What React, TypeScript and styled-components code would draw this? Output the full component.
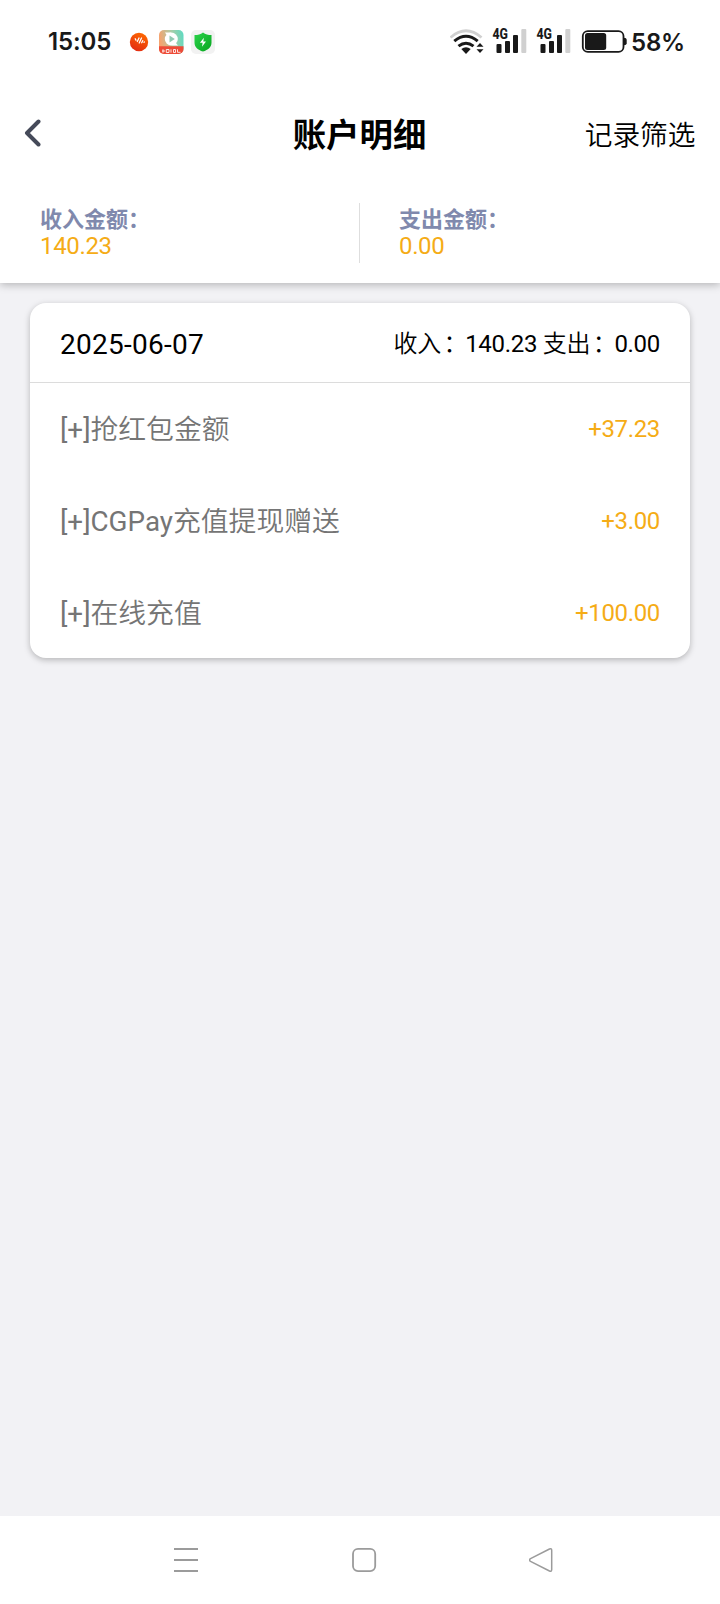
import React from "react";
import styled, { createGlobalStyle } from "styled-components";

const GlobalStyle = createGlobalStyle`
  * { box-sizing: border-box; }
  body {
    margin: 0;
    background: #f2f2f5;
    font-family: Roboto, "Noto Sans CJK SC", sans-serif;
    color: #000;
  }
`;

const Screen = styled.div`
  display: flex;
  flex-direction: column;
  width: 720px;
  height: 1604px;
  background: #f2f2f5;
`;

const Top = styled.header`
  height: 283px;
  background: #fff;
  box-shadow: 0 2px 8px rgba(0, 0, 0, 0.25);
`;

const StatusBar = styled.div`
  display: flex;
  justify-content: space-between;
  align-items: center;
  height: 84px;
  padding: 0 35px 0 48px;
  font: 600 24px/30px Inter, sans-serif;
  color: #191919;
`;

const StatusGroup = styled.div`
  display: flex;
  align-items: center;
  height: 30px;
`;

const Clock = styled.span`
  width: 80px;
  letter-spacing: -0.1px;
`;

const Percent = styled.span`
  padding-top: 1px;
  letter-spacing: -0.2px;
`;

const NavBar = styled.nav`
  display: grid;
  grid-template-columns: 1fr auto 1fr;
  align-items: center;
  height: 100px;
  padding: 0 24.5px 0 23.5px;
`;

const BackButton = styled.button`
  display: flex;
  padding: 0;
  border: 0;
  background: none;
`;

const Title = styled.h1`
  margin: 0;
  padding-top: 3px;
  font-size: 33.4px;
  line-height: 40px;
  font-weight: 700;
`;

const FilterButton = styled.button`
  justify-self: end;
  padding: 0 0 3px;
  border: 0;
  background: none;
  color: #000;
  font: 350 27.7px/40px "Noto Sans CJK SC", sans-serif;
`;

const Totals = styled.div`
  display: flex;
  padding-top: 19px;
`;

const Total = styled.div<{ $divided?: boolean }>`
  width: ${(p) => (p.$divided ? "360px" : "359px")};
  height: 60px;
  padding-left: ${(p) => (p.$divided ? "40px" : "39px")};
  border-right: ${(p) => (p.$divided ? "1px solid #dedede" : "0")};
`;

const TotalLabel = styled.div`
  height: 31px;
  font-size: 22px;
  line-height: 33px;
  font-weight: 700;
  color: #8089ad;
`;

const Colon = styled.span`
  padding-left: 2.5px;
  margin-right: -2px;
`;

const Amount = styled.div`
  font-size: 24px;
  line-height: 24px;
  letter-spacing: -0.35px;
  color: #f5ac16;
`;

const Card = styled.section`
  width: 660px;
  margin: 20px 30px 0;
  border-radius: 16px;
  background: #fff;
  box-shadow: 0 2px 6px rgba(0, 0, 0, 0.25);
`;

const CardHead = styled.div`
  display: flex;
  justify-content: space-between;
  align-items: center;
  height: 80px;
  padding: 3px 30px 0;
  border-bottom: 1px solid #dcdcdc;
`;

const DateText = styled.span`
  padding-top: 1px;
  font-size: 28px;
  line-height: 34px;
  letter-spacing: 0.25px;
`;

const DayTotals = styled.span`
  padding-bottom: 5px;
  font-size: 24px;
  letter-spacing: -0.3px;
`;

const Cjk = styled.span`
  font-family: "Noto Sans CJK SC", sans-serif;
  font-weight: 350;
`;

const Entry = styled.div`
  display: flex;
  justify-content: space-between;
  align-items: center;
  height: 92px;
  padding: 0 30px;

  &:last-child {
    height: 91px;
  }
`;

const EntryName = styled.span`
  padding-bottom: 4px;
  font-size: 27.8px;
  color: #757575;
`;

const Main = styled.main`
  flex: 1;
`;

const SystemNav = styled.footer`
  display: flex;
  align-items: center;
  height: 88px;
  padding: 0 0 2px 173px;
  background: #fff;
`;

const NavSlot = styled.div`
  width: 178px;
  height: 26px;
`;

const Signal = () => (
  <svg width="44" height="30" viewBox="0 0 44 30">
    <text x="0.4" y="11.5" fontFamily="Roboto, sans-serif" fontSize="14" fontWeight="800" fill="#191919" textLength="15.5" lengthAdjust="spacingAndGlyphs">4G</text>
    <g fill="#191919">
      <rect x="4.5" y="17" width="5" height="9" rx="1" />
      <rect x="13" y="14" width="5" height="12" rx="1" />
      <rect x="21" y="8" width="5" height="18" rx="1" />
      <rect x="29.3" y="2" width="5" height="24" rx="1" fill="#d0d0d0" />
    </g>
  </svg>
);

const entries = [
  { code: "[+]", name: "抢红包金额", amount: "+37.23" },
  { code: "[+]CGPay", name: "充值提现赠送", amount: "+3.00" },
  { code: "[+]", name: "在线充值", amount: "+100.00" },
];

export default function App() {
  return (
    <>
      <GlobalStyle />
      <Screen>
        <Top>
          <StatusBar>
            <StatusGroup>
              <Clock>15:05</Clock>
              <svg width="90" height="30" viewBox="128 27 90 30">
                <defs>
                  <linearGradient id="sun" x1="0.8" y1="0" x2="0.3" y2="1">
                    <stop offset="0" stopColor="#ff6b00" />
                    <stop offset="1" stopColor="#e22b12" />
                  </linearGradient>
                  <linearGradient id="video" x1="0" y1="0.2" x2="1" y2="0">
                    <stop offset="0" stopColor="#f5a36f" />
                    <stop offset="0.5" stopColor="#a9cda8" />
                    <stop offset="1" stopColor="#55dcc4" />
                  </linearGradient>
                  <linearGradient id="shield" x1="0" y1="0" x2="1" y2="1">
                    <stop offset="0" stopColor="#2bd34b" />
                    <stop offset="1" stopColor="#07a51f" />
                  </linearGradient>
                  <clipPath id="tile">
                    <rect x="159" y="30" width="24.5" height="24" rx="5" />
                  </clipPath>
                </defs>
                <circle cx="139" cy="42" r="9.2" fill="url(#sun)" />
                <path d="M135.2 38.8l.8 1.5M137.3 41.500l1.700-3.500M139.200 43l2.300-5M141.700 42.700l1-2M144 42.300l.4-.4" stroke="#fff" strokeWidth="1.3" strokeLinecap="round" fill="none" />
                <g clipPath="url(#tile)">
                  <rect x="159" y="30" width="25" height="24" fill="url(#video)" />
                  <path d="M159 46.200h25V54h-25z" fill="#ee4b38" />
                  <circle cx="171.300" cy="39" r="6.500" fill="#fff" />
                  <path d="M165 32.600h6v3h-4z" fill="#fff" />
                  <path d="M175.500 42.500l2.500 3h-6z" fill="#fff" />
                  <path d="M169.500 35.500v7l5.300-3.500z" fill="#92c9b2" />
                  <path d="M162 51h3M163 49.300v3.400M166.300 49.500h2.700v3h-2.700zM171 49.300v3.400M173.500 49.500h2v3h-2zM177.500 49.300v3h3" stroke="#fff" strokeWidth="1" fill="none" opacity="0.85" />
                </g>
                <rect x="191" y="30" width="24" height="24" rx="5" fill="#f2f2f2" />
                <path d="M203 32.500c2.500 1.800 5 2.500 8.500 2.600v7.400c0 4.700-3.400 7.500-8.500 9-5.100-1.500-8.500-4.300-8.500-9v-7.400c3.500-.1 6-.8 8.500-2.600z" fill="url(#shield)" />
                <path d="M203.900 37.700l-4 5h2.700l-.6 4 4-5.200h-2.700z" fill="#fff" />
              </svg>
            </StatusGroup>
            <StatusGroup>
              <svg width="42" height="30" viewBox="450 27 42 30">
                <g fill="none" strokeWidth="3" strokeLinecap="butt">
                  <path d="M450.500 37.500q15.500-13.500 31 0" stroke="#d0d0d0" strokeWidth="2.700" />
                  <path d="M454.300 41.200q11.700-9.800 23.400 0M458.500 46.200q7.500-6 15 0" stroke="#191919" />
                </g>
                <path d="M461.300 49q4.700-3.500 9.400 0L466 54z" fill="#191919" />
                <path d="M476.500 46.800l3.500-3.800 3.500 3.800zM476.500 49.300h7l-3.500 3.700z" fill="#191919" />
              </svg>
              <Signal />
              <Signal />
              <svg width="51" height="30" viewBox="580 27 51 30">
                <rect x="582.8" y="31.1" width="40.7" height="20.8" rx="5" fill="none" stroke="#191919" strokeWidth="1.8" />
                <rect x="585" y="33" width="21.2" height="17" rx="2.5" fill="#191919" />
                <path d="M624 37.800q2.700 0 2.700 2v3.400q0 2-2.700 2z" fill="#191919" />
              </svg>
              <Percent>58%</Percent>
            </StatusGroup>
          </StatusBar>
          <NavBar>
            <BackButton aria-label="返回">
              <svg width="18" height="30" viewBox="0 0 18 30">
                <path d="M14.500 2.500L3 14l11.500 11.500" fill="none" stroke="#454a59" strokeWidth="4" strokeLinecap="round" strokeLinejoin="round" />
              </svg>
            </BackButton>
            <Title>账户明细</Title>
            <FilterButton>记录筛选</FilterButton>
          </NavBar>
          <Totals>
            <Total $divided>
              <TotalLabel>收入金额：</TotalLabel>
              <Amount>140.23</Amount>
            </Total>
            <Total>
              <TotalLabel>支出金额：</TotalLabel>
              <Amount>0.00</Amount>
            </Total>
          </Totals>
        </Top>
        <Main>
          <Card>
            <CardHead>
              <DateText>2025-06-07</DateText>
              <DayTotals>
                <Cjk>收入<Colon>：</Colon></Cjk>140.23 <Cjk>支出<Colon>：</Colon></Cjk>0.00
              </DayTotals>
            </CardHead>
            {entries.map((e) => (
              <Entry key={e.name}>
                <EntryName>{e.code}<Cjk>{e.name}</Cjk></EntryName>
                <Amount>{e.amount}</Amount>
              </Entry>
            ))}
          </Card>
        </Main>
        <SystemNav>
          <NavSlot>
            <svg width="26" height="26" viewBox="0 0 26 26">
              <path d="M1 3h24M1 14h24M1 25h24" stroke="#9b9b9b" strokeWidth="2" />
            </svg>
          </NavSlot>
          <NavSlot>
            <svg width="26" height="26" viewBox="0 0 26 26">
              <rect x="2" y="2.9" width="22.2" height="22.2" rx="5" fill="none" stroke="#9b9b9b" strokeWidth="1.8" />
            </svg>
          </NavSlot>
          <NavSlot>
            <svg width="26" height="26" viewBox="0 0 26 26">
              <path d="M1.500 12.600L20.500 3q2.200-.8 2.200 1.500v19q0 2.300-2.200 1.500L1.500 15.400q-2-1.400 0-2.800z" fill="none" stroke="#9b9b9b" strokeWidth="1.500" strokeLinejoin="round" />
            </svg>
          </NavSlot>
        </SystemNav>
      </Screen>
    </>
  );
}
